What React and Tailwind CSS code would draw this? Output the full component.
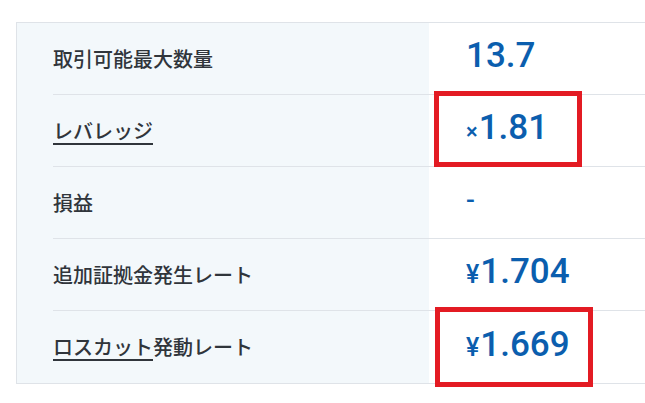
import React from "react";

const rows = [
  { label: "取引可能最大数量", value: <span>13.7</span> },
  {
    label: <span className="underline underline-offset-[4px] decoration-[2px]">レバレッジ</span>,
    value: (
      <span>
        <span className="text-[22px] mr-[1px]">×</span>1.81
      </span>
    ),
  },
  { label: "損益", value: <span className="text-[26px]">-</span> },
  {
    label: "追加証拠金発生レート",
    value: (
      <span>
        <span className="text-[25px] mr-[1px]">¥</span>1.704
      </span>
    ),
  },
  {
    label: (
      <span>
        <span className="underline underline-offset-[4px] decoration-[2px]">ロスカット</span>発動レート
      </span>
    ),
    value: (
      <span>
        <span className="text-[25px] mr-[1px]">¥</span>1.669
      </span>
    ),
  },
];

export default function App() {
  return (
    <div className="w-[645px] h-[403px] overflow-hidden bg-white">
      <div className="relative pt-[22px] pl-[16px]">
        <div className="w-[700px] border-t border-l border-b border-[#dfe3e8]">
          {rows.map((row, i) => (
            <div key={i} className="flex h-[72px]">
              <div className="w-[412px] bg-[#f3f8fb] pl-[36px]">
                <div
                  className={
                    "h-full flex items-center text-[#30353b] font-medium text-[20px] " +
                    (i < rows.length - 1 ? "border-b border-[#dfe3e8]" : "")
                  }
                  style={{ fontFamily: '"Noto Sans CJK JP", "Noto Sans", sans-serif' }}
                >
                  {row.label}
                </div>
              </div>
              <div
                className={
                  "flex-1 flex items-center pl-[37px] pb-[4px] text-[35px] font-medium text-[#0b5eae] " +
                  (i < rows.length - 1 ? "border-b border-[#dfe3e8]" : "")
                }
                style={{ fontFamily: "Roboto, 'Noto Sans', sans-serif" }}
              >
                {row.value}
              </div>
            </div>
          ))}
        </div>

        {/* annotation boxes */}
        <div className="absolute left-[434px] top-[91px] w-[148px] h-[76px] border-[5px] border-[#e31b23]" />
        <div className="absolute left-[435px] top-[307px] w-[158px] h-[80px] border-[5px] border-[#e31b23]" />
      </div>
    </div>
  );
}
